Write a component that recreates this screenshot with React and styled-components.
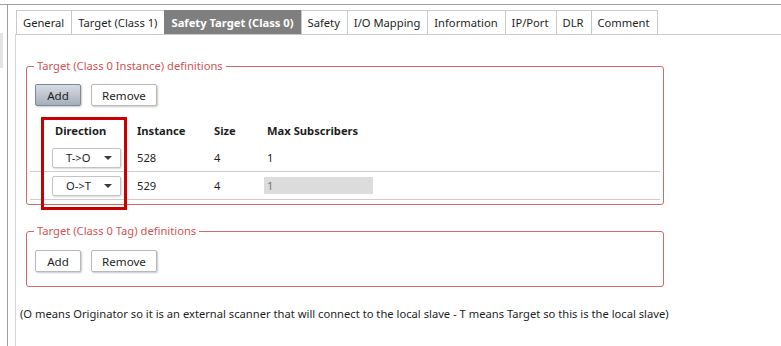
import React from 'react';
import styled, { createGlobalStyle } from 'styled-components';

const Global = createGlobalStyle`
  body {
    margin: 0;
    background: #ffffff;
    font-family: "Noto Sans", "Open Sans", sans-serif;
    font-size: 11.2px;
    color: #1e1e1e;
  }
`

const Page = styled.div`
  display: flex;
  margin-top: 4px;
  height: 342px;
  border-top: 1px solid #a0a0a0;
  overflow: hidden;
`

const LeftPane = styled.div`
  width: 7px;
  flex: none;
  border-right: 1px solid #a0a0a0;
`

const ScrollThumb = styled.div`
  width: 3px;
  height: 35px;
  margin-top: 28px;
  background: #e4e4e4;
`

const Main = styled.div`
  flex: 1;
  margin-left: 7px;
  padding-top: 5px;
  display: flex;
  flex-direction: column;
`

const TabStrip = styled.div`
  display: flex;
  padding-left: 1px;
  height: 24px;
`

const Tab = styled.div`
  display: flex;
  align-items: center;
  padding: 0 7px 0 6px;
  border: 1px solid #c9c9c9;
  border-bottom: none;
  margin-left: -1px;
  white-space: nowrap;
  background: ${p => (p.$active ? '#7f7f7f' : '#ffffff')};
  color: ${p => (p.$active ? '#ffffff' : '#1e1e1e')};
  font-weight: ${p => (p.$active ? 700 : 400)};
  border-color: ${p => (p.$active ? '#7f7f7f' : '#c9c9c9')};
  &:first-child { margin-left: 0; }
`

const Panel = styled.div`
  flex: 1;
  border-top: 1px solid #c9c9c9;
  border-left: 1px solid #d4d4d4;
  padding: 0 0 0 4px;
  position: relative;
`

const Group = styled.fieldset`
  margin: ${p => p.$top}px 0 0 6px;
  width: 638px;
  box-sizing: border-box;
  border: 1px solid #cf6b6b;
  border-radius: 3px;
  padding: ${p => p.$pt}px 3px ${p => p.$pb}px 3px;
`

const Legend = styled.legend`
  color: #d25353;
  padding: 0 3px;
  margin-left: 4px;
  line-height: 16px;
`

const ButtonRow = styled.div`
  display: flex;
  gap: 10px;
  padding-left: 5px;
`

const Button = styled.div`
  box-sizing: border-box;
  width: ${p => p.$w}px;
  height: 22px;
  display: flex;
  align-items: center;
  justify-content: center;
  border-radius: 2px;
  border: 1px solid ${p => (p.$pressed ? '#7c8797' : '#b9b9b9')};
  background: ${p => (p.$pressed ? 'linear-gradient(#d7dce3, #a5aebb)' : '#ffffff')};
  box-shadow: 1px 1px 2px rgba(0, 0, 0, 0.22);
  color: #1e1e1e;
  font-size: 11.6px;
`

const Table = styled.div`
  margin-top: 10px;
  display: grid;
  grid-template-columns: 107px 77px 53px 1fr;
`

const Cell = styled.div`
  display: flex;
  align-items: center;
  height: ${p => (p.$head ? 28 : 27)}px;
  font-weight: ${p => (p.$head ? 700 : 400)};
  padding-left: ${p => p.$indent || 0}px;
  border-bottom: ${p => (p.$head ? 'none' : '1px solid #cdcdcd')};
`

const Combo = styled.div`
  box-sizing: border-box;
  width: 69px;
  height: 20px;
  display: flex;
  align-items: center;
  justify-content: space-between;
  padding: 0 8px 0 13px;
  border: 1px solid #c4c4c4;
  border-radius: 2px;
  box-shadow: 1px 1px 2px rgba(0, 0, 0, 0.15);
  background: #ffffff;
`

const Arrow = styled.span`
  width: 0;
  height: 0;
  border-left: 4px solid transparent;
  border-right: 4px solid transparent;
  border-top: 4px solid #3a3a3a;
`

const Disabled = styled.div`
  width: 109px;
  height: 17px;
  margin-left: -3px;
  padding-left: 3px;
  box-sizing: border-box;
  display: flex;
  align-items: center;
  background: #dcdcdc;
  color: #777777;
`

const Highlight = styled.div`
  position: absolute;
  left: 25px;
  top: 82px;
  width: 86px;
  height: 93px;
  box-sizing: border-box;
  border: 3px solid #c80000;
  pointer-events: none;
`

const Note = styled.div`
  margin-top: 19px;
  white-space: nowrap;
`

const tabs = [
  'General',
  'Target (Class 1)',
  'Safety Target (Class 0)',
  'Safety',
  'I/O Mapping',
  'Information',
  'IP/Port',
  'DLR',
  'Comment',
]

const rows = [
  { dir: 'T->O', instance: '528', size: '4', max: '1', locked: false },
  { dir: 'O->T', instance: '529', size: '4', max: '1', locked: true },
]

function App() {
  return (
    <>
      <Global />
      <Page>
        <LeftPane>
          <ScrollThumb />
        </LeftPane>
        <Main>
          <TabStrip>
            {tabs.map(t => (
              <Tab key={t} $active={t === 'Safety Target (Class 0)'}>{t}</Tab>
            ))}
          </TabStrip>
          <Panel>
            <Group $top={23} $pt={10} $pb={4}>
              <Legend>Target (Class 0 Instance) definitions</Legend>
              <ButtonRow>
                <Button $w={46} $pressed>Add</Button>
                <Button $w={66}>Remove</Button>
              </ButtonRow>
              <Table>
                <Cell $head $indent={25}>Direction</Cell>
                <Cell $head>Instance</Cell>
                <Cell $head>Size</Cell>
                <Cell $head>Max Subscribers</Cell>
                {rows.map(r => (
                  <React.Fragment key={r.instance}>
                    <Cell $indent={22}>
                      <Combo>{r.dir}<Arrow /></Combo>
                    </Cell>
                    <Cell>{r.instance}</Cell>
                    <Cell>{r.size}</Cell>
                    <Cell>{r.locked ? <Disabled>{r.max}</Disabled> : r.max}</Cell>
                  </React.Fragment>
                ))}
              </Table>
            </Group>
            <Group $top={18} $pt={11} $pb={14}>
              <Legend>Target (Class 0 Tag) definitions</Legend>
              <ButtonRow>
                <Button $w={46}>Add</Button>
                <Button $w={66}>Remove</Button>
              </ButtonRow>
            </Group>
            <Note>
              (O means Originator so it is an external scanner that will connect to the local slave - T means Target so this is the local slave)
            </Note>
            <Highlight />
          </Panel>
        </Main>
      </Page>
    </>
  );
}

export default App;
